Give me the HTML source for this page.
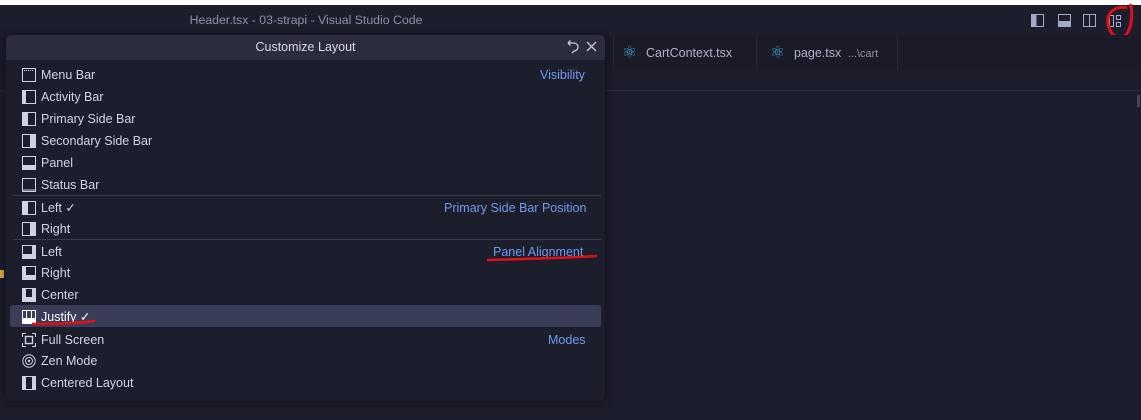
<!DOCTYPE html>
<html><head><meta charset="utf-8"><style>
*{margin:0;padding:0;box-sizing:border-box}
body{width:1141px;height:420px;overflow:hidden;background:#1c1d2a;font-family:"Liberation Sans",sans-serif;position:relative;color:#d2d4e4}
.abs{position:absolute}
.row{position:absolute;left:22px;height:22px;font-size:12.5px;line-height:22px;white-space:nowrap}
.row svg{position:absolute;left:0;top:4px}
.row span{position:absolute;left:19px}
.sep{position:absolute;left:13px;width:588px;height:1px;background:#3a3c4c}
.bl{position:absolute;font-size:12.5px;line-height:22px;color:#6b9cf0;white-space:nowrap}
</style></head><body>
<div class="abs" style="left:0;top:0;width:1141px;height:5px;background:#fff"></div>
<div class="abs" style="left:0;top:5px;width:1141px;height:30px;background:#1d1e2c"></div>
<div class="abs" style="left:0;top:13px;width:612px;text-align:center;font-size:12.3px;color:#8e90a8">Header.tsx - 03-strapi - Visual Studio Code</div>
<svg class="abs" style="left:1030px;top:13px" width="100" height="16" viewBox="0 0 100 16">
<rect x="1.5" y="1.5" width="12" height="12" fill="none" stroke="#a4a8cc"/><rect x="1.5" y="1.5" width="5" height="12" fill="#a4a8cc"/>
<rect x="28.5" y="1.5" width="12" height="12" fill="none" stroke="#a4a8cc"/><rect x="28.5" y="8" width="12" height="5.5" fill="#a4a8cc"/>
<rect x="53.5" y="1.5" width="12" height="12" fill="none" stroke="#a4a8cc"/><line x1="59.5" y1="1.5" x2="59.5" y2="13.5" stroke="#a4a8cc"/>
<rect x="79.5" y="2.5" width="4" height="11" fill="none" stroke="#a4a8cc"/><rect x="86.5" y="2.5" width="4" height="4" fill="none" stroke="#a4a8cc"/><rect x="86.5" y="9.5" width="4" height="4" fill="none" stroke="#a4a8cc"/>
</svg>
<svg class="abs" style="left:1100px;top:2px" width="38" height="38"><path d="M17 35 C9 32 6 20 9 13 C12 6 22 4 27 6 M30 2 C33 8 32 22 28 30 C25 36 18 37 13 33" fill="none" stroke="#e0101a" stroke-width="3"/></svg>
<div class="abs" style="left:0;top:35px;width:1141px;height:35px;background:#1a1b27"></div>
<div class="abs" style="left:613px;top:35px;width:1px;height:35px;background:#262838"></div>
<div class="abs" style="left:756px;top:35px;width:1px;height:35px;background:#262838"></div>
<div class="abs" style="left:897px;top:35px;width:1px;height:35px;background:#262838"></div>
<div class="abs" style="left:0;top:90px;width:1141px;height:1px;background:#2a2c3a"></div>
<div class="abs" style="left:622px;top:43px;font-size:17px;color:#3fa8e0">⚛</div>
<div class="abs" style="left:646px;top:46px;font-size:12.5px;color:#aeb0c8">CartContext.tsx</div>
<div class="abs" style="left:770px;top:43px;font-size:17px;color:#3fa8e0">⚛</div>
<div class="abs" style="left:794px;top:46px;font-size:12.5px;color:#aeb0c8">page.tsx <span style="font-size:11px;color:#8e90a8">&nbsp;...\cart</span></div>
<div class="abs" style="left:1137px;top:95px;width:3px;height:12px;background:#445"></div>
<div class="abs" style="left:0;top:270px;width:4px;height:8px;background:#d9a53a"></div>
<div class="abs" style="left:6px;top:35px;width:599px;height:366px;background:#1d1e2c;border-radius:5px;box-shadow:0 0 8px #0008"></div>
<div class="abs" style="left:6px;top:35px;width:599px;height:25px;background:#2b2c3c;border-radius:5px 5px 0 0"></div>
<div class="abs" style="left:6px;top:40px;width:599px;text-align:center;font-size:12.5px;color:#d8dae8">Customize Layout</div>
<svg class="abs" style="left:565px;top:40px" width="34" height="14"><path d="M3 3 L9 3 A4 4 0 0 1 9 11 L7 13" fill="none" stroke="#c8cad8" stroke-width="1.3"/><path d="M3 3 L5.5 0.5 M3 3 L5.5 5.5" stroke="#c8cad8" stroke-width="1.3"/><path d="M22 2 L31 11 M31 2 L22 11" stroke="#c8cad8" stroke-width="1.3"/></svg>
<div class="abs" style="left:10px;top:305px;width:591px;height:22px;background:#3a3d58;border-radius:3px"></div>
<div class="sep" style="top:195px"></div>
<div class="sep" style="top:239px"></div>

<div class="row" style="top:64px"><svg width="14" height="14"><rect x=".5" y=".5" width="13" height="13" fill="none" stroke="#d0d2e0"/><line x1="2" y1="2.5" x2="12" y2="2.5" stroke="#d0d2e0" stroke-dasharray="1 1"/></svg><span>Menu Bar</span></div>
<div class="bl" style="left:540px;top:64px">Visibility</div>
<div class="row" style="top:86px"><svg width="14" height="14"><rect x=".5" y=".5" width="13" height="13" fill="none" stroke="#d0d2e0"/><rect x="1" y="1" width="3" height="12" fill="#d0d2e0"/></svg><span>Activity Bar</span></div>
<div class="row" style="top:108px"><svg width="14" height="14"><rect x=".5" y=".5" width="13" height="13" fill="none" stroke="#d0d2e0"/><rect x="1" y="1" width="5" height="12" fill="#d0d2e0"/></svg><span>Primary Side Bar</span></div>
<div class="row" style="top:130px"><svg width="14" height="14"><rect x=".5" y=".5" width="13" height="13" fill="none" stroke="#d0d2e0"/><rect x="8" y="1" width="5" height="12" fill="#d0d2e0"/></svg><span>Secondary Side Bar</span></div>
<div class="row" style="top:152px"><svg width="14" height="14"><rect x=".5" y=".5" width="13" height="13" fill="none" stroke="#d0d2e0"/><rect x="1" y="9" width="12" height="4" fill="#d0d2e0"/></svg><span>Panel</span></div>
<div class="row" style="top:174px"><svg width="14" height="14"><rect x=".5" y=".5" width="13" height="13" fill="none" stroke="#d0d2e0"/><line x1="1" y1="12" x2="13" y2="12" stroke="#d0d2e0"/></svg><span>Status Bar</span></div>

<div class="row" style="top:197px"><svg width="14" height="14"><rect x=".5" y=".5" width="13" height="13" fill="none" stroke="#d0d2e0"/><rect x="1" y="1" width="5" height="12" fill="#d0d2e0"/></svg><span>Left ✓</span></div>
<div class="bl" style="left:444px;top:197px">Primary Side Bar Position</div>
<div class="row" style="top:218px"><svg width="14" height="14"><rect x=".5" y=".5" width="13" height="13" fill="none" stroke="#d0d2e0"/><rect x="8" y="1" width="5" height="12" fill="#d0d2e0"/></svg><span>Right</span></div>

<div class="row" style="top:241px"><svg width="14" height="14"><rect x=".5" y=".5" width="13" height="13" fill="none" stroke="#d0d2e0"/><rect x="1" y="9" width="9" height="4" fill="#d0d2e0"/><rect x="10" y="1" width="3" height="12" fill="#d0d2e0"/></svg><span>Left</span></div>
<div class="bl" style="left:493px;top:241px">Panel Alignment</div>
<svg class="abs" style="left:485px;top:254px" width="115" height="9"><path d="M2 6 C40 5 80 4 112 2" stroke="#e0101a" stroke-width="2.5" fill="none"/></svg>
<div class="row" style="top:262px"><svg width="14" height="14"><rect x=".5" y=".5" width="13" height="13" fill="none" stroke="#d0d2e0"/><rect x="1" y="1" width="3" height="12" fill="#d0d2e0"/><rect x="4" y="9" width="9" height="4" fill="#d0d2e0"/></svg><span>Right</span></div>
<div class="row" style="top:284px"><svg width="14" height="14"><rect x=".5" y=".5" width="13" height="13" fill="none" stroke="#d0d2e0"/><rect x="1" y="1" width="3" height="12" fill="#d0d2e0"/><rect x="10" y="1" width="3" height="12" fill="#d0d2e0"/><rect x="4" y="9" width="6" height="4" fill="#d0d2e0"/></svg><span>Center</span></div>
<div class="row" style="top:306px;color:#fff"><svg width="14" height="14"><rect x=".5" y=".5" width="13" height="13" fill="none" stroke="#fff"/><rect x="1" y="8" width="12" height="5" fill="#fff"/><line x1="4.5" y1="1" x2="4.5" y2="8" stroke="#fff"/><line x1="9.5" y1="1" x2="9.5" y2="8" stroke="#fff"/></svg><span>Justify ✓</span></div>
<svg class="abs" style="left:30px;top:318px" width="68" height="9"><path d="M2 6 C25 6 50 5 65 3" stroke="#e0101a" stroke-width="2.5" fill="none"/></svg>
<div class="row" style="top:329px"><svg width="14" height="14"><path d="M.5 4V.5H4M10 .5h3.5V4M13.5 10v3.5H10M4 13.5H.5V10" fill="none" stroke="#d0d2e0"/><rect x="3.5" y="3.5" width="7" height="7" fill="none" stroke="#d0d2e0" stroke-width="1.4"/></svg><span>Full Screen</span></div>
<div class="bl" style="left:548px;top:329px">Modes</div>
<div class="row" style="top:350px"><svg width="14" height="14"><circle cx="7" cy="7" r="6.2" fill="none" stroke="#d0d2e0"/><circle cx="7" cy="7" r="3.5" fill="none" stroke="#d0d2e0"/><circle cx="7" cy="7" r="1.2" fill="#d0d2e0"/></svg><span>Zen Mode</span></div>
<div class="row" style="top:372px"><svg width="14" height="14"><rect x=".5" y=".5" width="13" height="13" fill="none" stroke="#d0d2e0"/><rect x="1" y="1" width="3" height="12" fill="#d0d2e0"/><rect x="10" y="1" width="3" height="12" fill="#d0d2e0"/></svg><span>Centered Layout</span></div>
</body></html>
